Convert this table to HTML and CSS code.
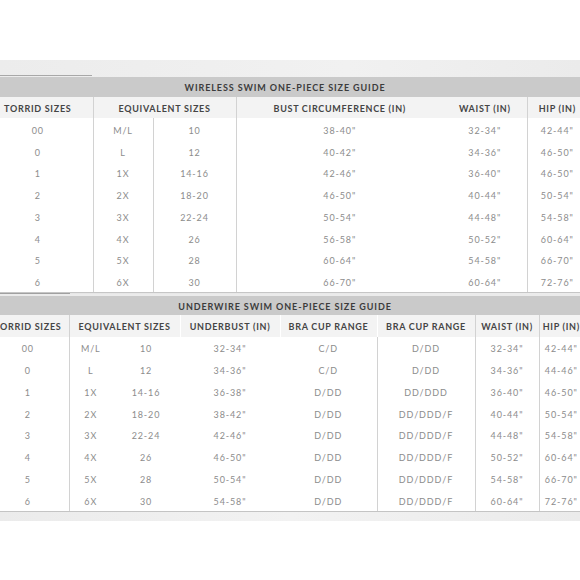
FILE: index.html
```html
<!DOCTYPE html>
<html>
<head>
<meta charset="utf-8">
<link rel="stylesheet" href="styles.css">
</head>
<body>
<div class="page">
  <div class="top-space"></div>
  <div class="band band-top"><div class="band-line"></div></div>

  <table class="guide t1">
    <colgroup>
      <col class="a0"><col class="a1"><col class="a2"><col class="a3"><col class="a4"><col class="a5">
    </colgroup>
    <tr><th class="title" colspan="6">WIRELESS SWIM ONE-PIECE SIZE GUIDE</th></tr>
    <tr class="head">
      <th>TORRID SIZES</th>
      <th class="bl" colspan="2">EQUIVALENT SIZES</th>
      <th class="bl">BUST CIRCUMFERENCE (IN)</th>
      <th>WAIST (IN)</th>
      <th class="bl">HIP (IN)</th>
    </tr>
    <tr><td>00</td><td class="bl">M/L</td><td class="bl">10</td><td class="bl">38-40"</td><td>32-34"</td><td class="bl">42-44"</td></tr>
    <tr><td>0</td><td class="bl">L</td><td class="bl">12</td><td class="bl">40-42"</td><td>34-36"</td><td class="bl">46-50"</td></tr>
    <tr><td>1</td><td class="bl">1X</td><td class="bl">14-16</td><td class="bl">42-46"</td><td>36-40"</td><td class="bl">46-50"</td></tr>
    <tr><td>2</td><td class="bl">2X</td><td class="bl">18-20</td><td class="bl">46-50"</td><td>40-44"</td><td class="bl">50-54"</td></tr>
    <tr><td>3</td><td class="bl">3X</td><td class="bl">22-24</td><td class="bl">50-54"</td><td>44-48"</td><td class="bl">54-58"</td></tr>
    <tr><td>4</td><td class="bl">4X</td><td class="bl">26</td><td class="bl">56-58"</td><td>50-52"</td><td class="bl">60-64"</td></tr>
    <tr><td>5</td><td class="bl">5X</td><td class="bl">28</td><td class="bl">60-64"</td><td>54-58"</td><td class="bl">66-70"</td></tr>
    <tr><td>6</td><td class="bl">6X</td><td class="bl">30</td><td class="bl">66-70"</td><td>60-64"</td><td class="bl">72-76"</td></tr>
  </table>

  <div class="band band-mid"></div>

  <table class="guide t2">
    <colgroup>
      <col class="b0"><col class="b1"><col class="b2"><col class="b3"><col class="b4"><col class="b5"><col class="b6"><col class="b7">
    </colgroup>
    <tr><th class="title" colspan="8">UNDERWIRE SWIM ONE-PIECE SIZE GUIDE</th></tr>
    <tr class="head">
      <th>TORRID SIZES</th>
      <th class="bl" colspan="2">EQUIVALENT SIZES</th>
      <th class="wl">UNDERBUST (IN)</th>
      <th class="wl">BRA CUP RANGE</th>
      <th class="wl">BRA CUP RANGE</th>
      <th class="bl">WAIST (IN)</th>
      <th class="bl">HIP (IN)</th>
    </tr>
    <tr><td>00</td><td class="bl">M/L</td><td>10</td><td>32-34"</td><td>C/D</td><td class="bl">D/DD</td><td class="bl">32-34"</td><td class="bl">42-44"</td></tr>
    <tr><td>0</td><td class="bl">L</td><td>12</td><td>34-36"</td><td>C/D</td><td class="bl">D/DD</td><td class="bl">34-36"</td><td class="bl">44-46"</td></tr>
    <tr><td>1</td><td class="bl">1X</td><td>14-16</td><td>36-38"</td><td>D/DD</td><td class="bl">DD/DDD</td><td class="bl">36-40"</td><td class="bl">46-50"</td></tr>
    <tr><td>2</td><td class="bl">2X</td><td>18-20</td><td>38-42"</td><td>D/DD</td><td class="bl">DD/DDD/F</td><td class="bl">40-44"</td><td class="bl">50-54"</td></tr>
    <tr><td>3</td><td class="bl">3X</td><td>22-24</td><td>42-46"</td><td>D/DD</td><td class="bl">DD/DDD/F</td><td class="bl">44-48"</td><td class="bl">54-58"</td></tr>
    <tr><td>4</td><td class="bl">4X</td><td>26</td><td>46-50"</td><td>D/DD</td><td class="bl">DD/DDD/F</td><td class="bl">50-52"</td><td class="bl">60-64"</td></tr>
    <tr><td>5</td><td class="bl">5X</td><td>28</td><td>50-54"</td><td>D/DD</td><td class="bl">DD/DDD/F</td><td class="bl">54-58"</td><td class="bl">66-70"</td></tr>
    <tr><td>6</td><td class="bl">6X</td><td>30</td><td>54-58"</td><td>D/DD</td><td class="bl">DD/DDD/F</td><td class="bl">60-64"</td><td class="bl">72-76"</td></tr>
  </table>

  <div class="band band-bottom"></div>
</div>
</body>
</html>
```

FILE: styles.css
```css
html, body {
  margin: 0;
  padding: 0;
  background: #ffffff;
}

body {
  width: 580px;
  height: 580px;
  overflow: hidden;
}

.page {
  width: 580px;
  display: flex;
  flex-direction: column;
  align-items: flex-start;
}

.top-space {
  height: 60px;
}

.band {
  width: 580px;
  background: linear-gradient(to right, #ececec 0%, #f1f1f1 60%, #ebebeb 100%);
}

.band-top {
  height: 17px;
  padding-top: 15px;
  box-sizing: border-box;
}

.band-line {
  width: 92px;
  height: 1px;
  background: #a8a8a8;
}

.band-mid {
  height: 4px;
  box-sizing: border-box;
  border-top: 1px solid #c6c6c6;
  background: linear-gradient(to right, #a0a0a0 0, #a0a0a0 70px, #e6e6e6 70px, #ececec 100%);
  background-size: 100% 1px;
  background-repeat: no-repeat;
  background-color: #ebebeb;
}

.band-bottom {
  height: 9px;
  border-top: 1px solid #c4c4c4;
  background: linear-gradient(to right, #ebebeb, #f2f2f2 50%, #ebebeb);
}

.guide {
  border-collapse: collapse;
  table-layout: fixed;
  font-family: Lato, "Open Sans", "DejaVu Sans", sans-serif;
  text-align: center;
}

.t1 {
  width: 604px;
  margin-left: -17px;
}

.t2 {
  width: 596px;
  margin-left: -13px;
}

.a0 { width: 110px; }
.a1 { width: 60px; }
.a2 { width: 83px; }
.a3 { width: 207px; }
.a4 { width: 84px; }
.a5 { width: 60px; }

.b0 { width: 82px; }
.b1 { width: 43px; }
.b2 { width: 68px; }
.b3 { width: 100px; }
.b4 { width: 97px; }
.b5 { width: 98px; }
.b6 { width: 64px; }
.b7 { width: 44px; }

.guide th,
.guide td {
  padding: 0;
  white-space: nowrap;
  overflow: hidden;
}

.guide th.title {
  background: #cacaca;
  height: 19px;
  padding-top: 1px;
  font-size: 9px;
  font-weight: 700;
  letter-spacing: 0.9px;
  color: #3c3c3c;
}

.t2 th.title {
  height: 18px;
}

.head th {
  background: #f3f3f3;
  height: 20px;
  padding-top: 1px;
  font-size: 9px;
  font-weight: 700;
  letter-spacing: 0.7px;
  color: #454545;
}

.t1 .head th {
  height: 19px;
  padding-top: 2px;
}

.t2 .head th {
  height: 21px;
}

.guide td {
  height: 19.75px;
  padding-top: 2px;
  font-size: 9px;
  letter-spacing: 0.9px;
  color: #8c8c8c;
}

.t1 td {
  height: 18.75px;
  padding-top: 3px;
}

.bl {
  border-left: 1px solid #d2d2d2;
}

.wl {
  border-left: 1px solid #ffffff;
}
```
